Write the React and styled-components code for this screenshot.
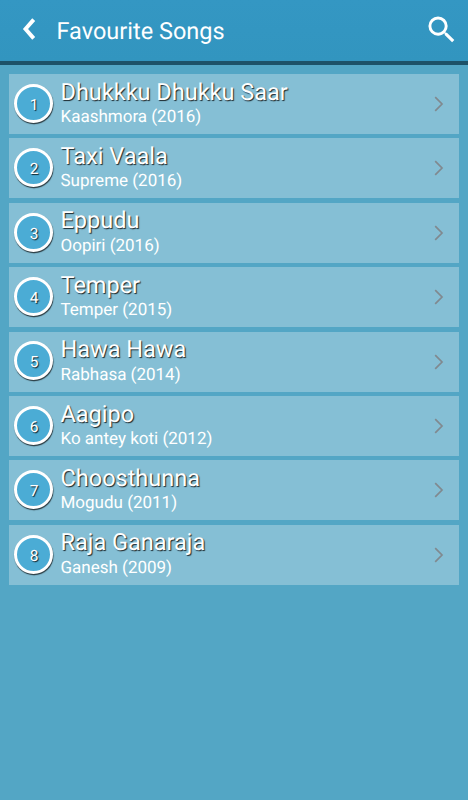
import React from "react";
import styled, { createGlobalStyle } from "styled-components";

const songs = [
  { title: "Dhukkku Dhukku Saar", movie: "Kaashmora", year: 2016 },
  { title: "Taxi Vaala", movie: "Supreme", year: 2016 },
  { title: "Eppudu", movie: "Oopiri", year: 2016 },
  { title: "Temper", movie: "Temper", year: 2015 },
  { title: "Hawa Hawa", movie: "Rabhasa", year: 2014 },
  { title: "Aagipo", movie: "Ko antey koti", year: 2012 },
  { title: "Choosthunna", movie: "Mogudu", year: 2011 },
  { title: "Raja Ganaraja", movie: "Ganesh", year: 2009 },
];

const App = () => {
  return (
    <Wrap>
      <GlobalStyle />
      <Header>
        <BackButton aria-label="Back">
          <svg width="14" height="24" viewBox="0 0 14 24">
            <path d="M11.7 2.6 3.5 12l8.2 9.4" fill="none" stroke="#fff" strokeWidth="3.9" />
          </svg>
        </BackButton>
        <HeaderTitle>Favourite Songs</HeaderTitle>
        <SearchButton aria-label="Search">
          <svg width="35.5" height="35.5" viewBox="0 0 24 24">
            <path
              fill="#fff"
              d="M15.5 14h-.79l-.28-.27A6.471 6.471 0 0 0 16 9.5 6.5 6.5 0 1 0 9.5 16c1.61 0 3.09-.59 4.23-1.57l.27.28v.79l5 4.99L20.49 19l-4.99-5zm-6 0C7.01 14 5 11.99 5 9.5S7.01 5 9.5 5 14 7.01 14 9.5 11.99 14 9.5 14z"
            />
          </svg>
        </SearchButton>
      </Header>
      <SongList>
        {songs.map((song, index) => (
          <SongRow key={`${index}_${song.title}`}>
            <NumberBadge>{index + 1}</NumberBadge>
            <SongInfo>
              <SongTitle>{song.title}</SongTitle>
              <SongMovie>{`${song.movie} (${song.year})`}</SongMovie>
            </SongInfo>
            <svg width="10" height="16" viewBox="0 0 10 16">
              <path d="M1.2 1.2 8 8l-6.8 6.8" fill="none" stroke="#80898f" strokeWidth="1.7" />
            </svg>
          </SongRow>
        ))}
      </SongList>
    </Wrap>
  );
};

export default App;

const GlobalStyle = createGlobalStyle`
  * {
    box-sizing: border-box;
  }
  body {
    margin: 0;
    font-family: Roboto, "Liberation Sans", sans-serif;
    text-rendering: geometricPrecision;
  }
`;
const Wrap = styled.div`
  display: flex;
  flex-direction: column;
  width: 100%;
  height: 100vh;
  overflow: hidden;
  background: #53a6c5;
`;
const Header = styled.header`
  display: flex;
  align-items: center;
  flex-shrink: 0;
  height: 65px;
  padding: 0 9px 0 22px;
  border-bottom: 4px solid #1d5268;
  background: linear-gradient(#3497c3, #3295bf);
`;
const IconButton = styled.button`
  display: flex;
  padding: 0;
  border: none;
  background: none;
`;
const BackButton = styled(IconButton)`
  margin-top: -3px;
`;
const HeaderTitle = styled.h1`
  margin: 0 0 0 20.5px;
  font-size: 23.5px;
  font-weight: 400;
  line-height: 28px;
  color: #fff;
`;
const SearchButton = styled(IconButton)`
  margin: -2px 0 0 auto;
`;
const SongList = styled.ul`
  display: flex;
  flex-direction: column;
  gap: 4.3px;
  margin: 0;
  padding: 9px 9px 0;
  list-style: none;
`;
const SongRow = styled.li`
  display: flex;
  align-items: center;
  height: 60.1px;
  padding: 0 15px 0 5px;
  background: #85bfd5;
`;
const NumberBadge = styled.span`
  display: flex;
  flex-shrink: 0;
  align-items: center;
  justify-content: center;
  width: 39px;
  height: 39px;
  margin-top: -1.5px;
  padding: 3px 0 0 1px;
  border: 3px solid #fff;
  border-radius: 50%;
  background: #4bacd5;
  box-shadow: 0.5px 1.3px 1px rgba(0, 0, 0, 0.7);
  font-size: 15.5px;
  color: #fff;
  text-shadow: 1px 1px 1px rgba(0, 0, 0, 0.8);
`;
const SongInfo = styled.div`
  flex: 1;
  margin: -2.6px 0 0 7.5px;
`;
const SongTitle = styled.div`
  font-size: 23.5px;
  line-height: 28px;
  color: #fff;
  text-shadow: 1px 1.3px 1px rgba(0, 0, 0, 0.8);
`;
const SongMovie = styled.div`
  margin-top: 1.4px;
  font-size: 17px;
  line-height: 21px;
  color: #fff;
`;
